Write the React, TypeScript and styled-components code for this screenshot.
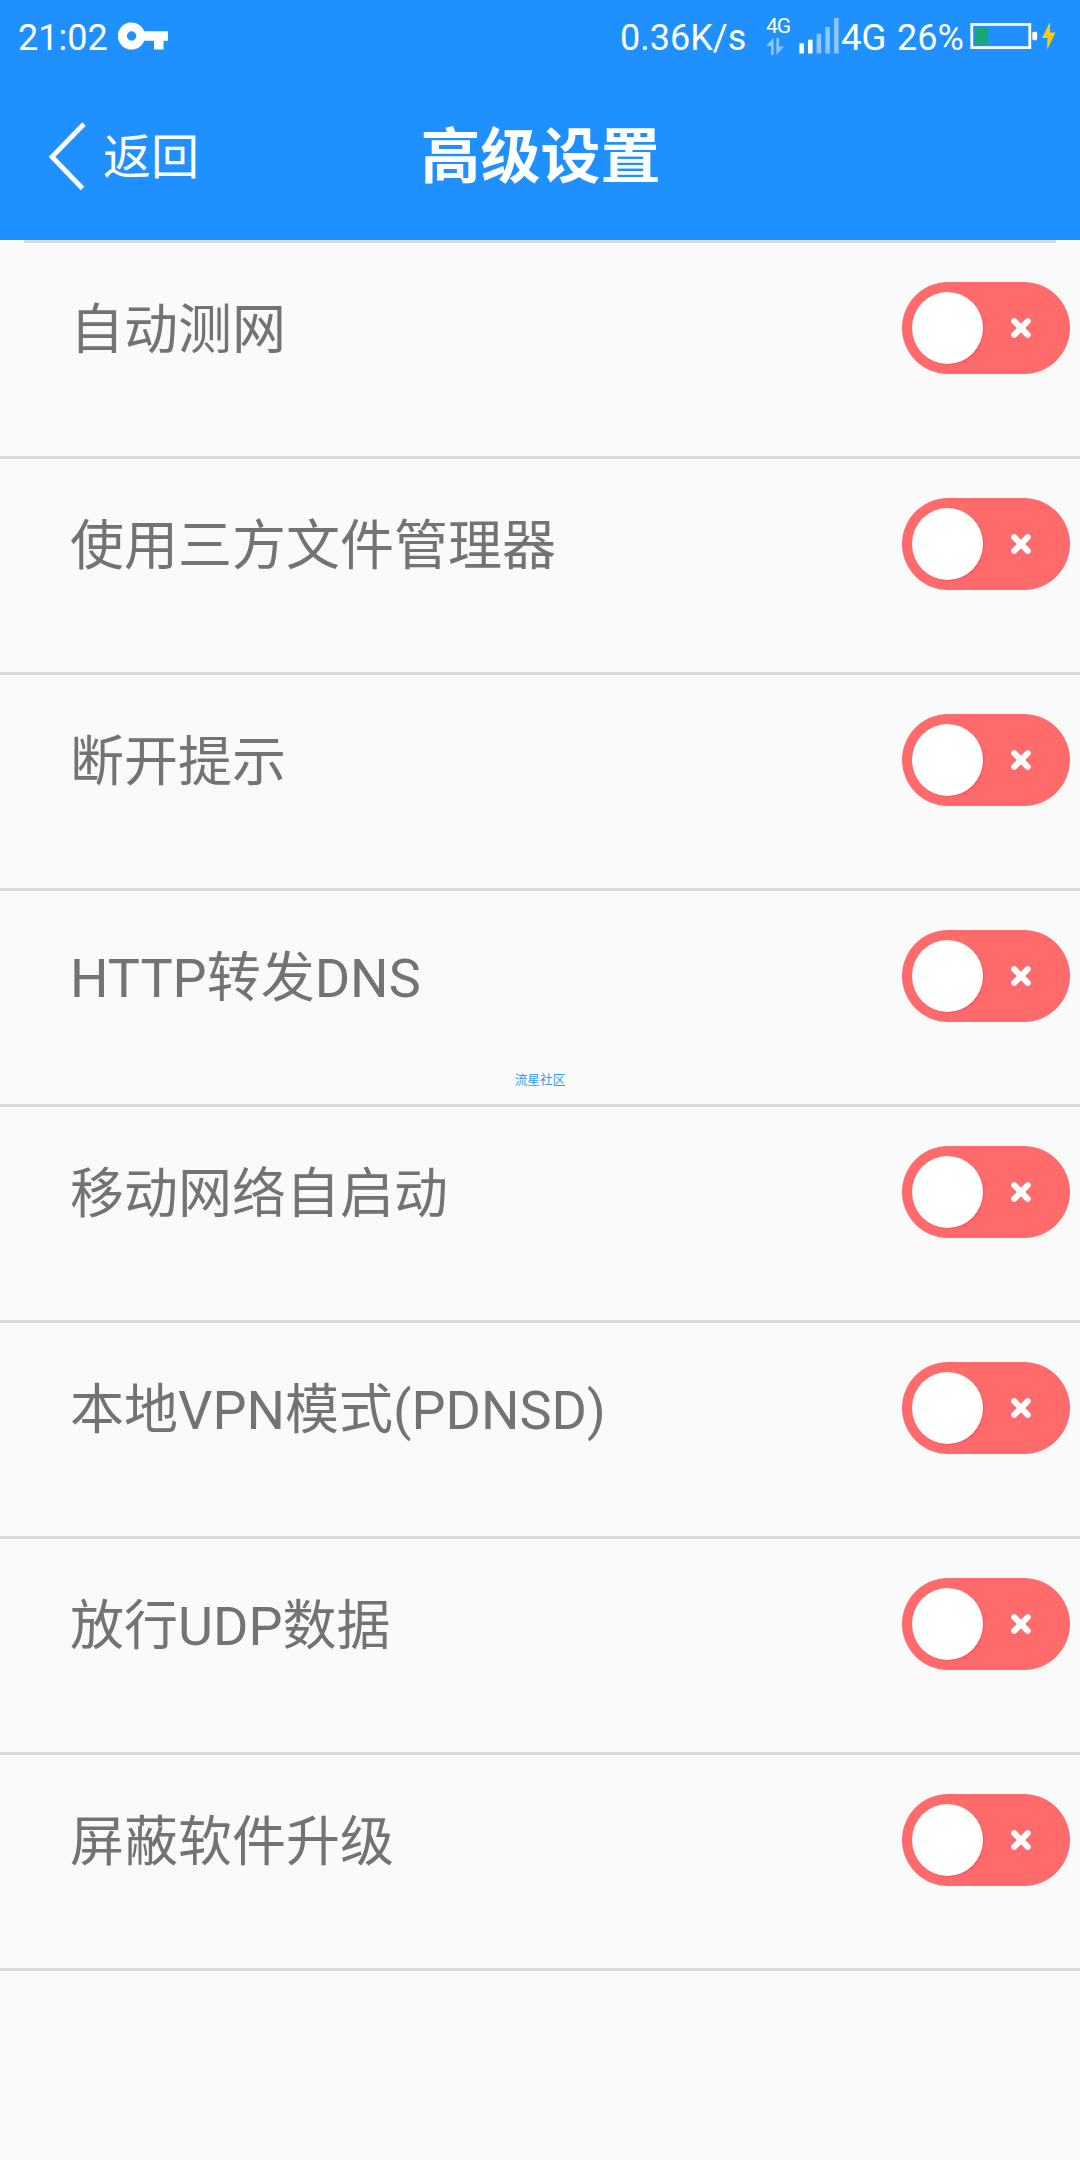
import React from "react";
import styled, { createGlobalStyle } from "styled-components";

const GlobalStyle = createGlobalStyle`
  * { box-sizing: border-box; }
  body {
    margin: 0;
    background: #fafafa;
    font-family: Roboto, "Noto Sans CJK SC", sans-serif;
  }
`;

const Screen = styled.div`
  position: relative;
  width: 1080px;
  height: 2160px;
  background: #fafafa;
  overflow: hidden;
`;

const TopArea = styled.header`
  height: 240px;
  background: #1e90ff;
  color: #fff;
`;

const StatusBar = styled.div`
  height: 72px;
  display: flex;
  align-items: flex-start;
  justify-content: space-between;
  padding-left: 18px;
`;

const StatusGroup = styled.div`
  display: flex;
  height: 72px;
`;

const StatusText = styled.span<{ $width: number; $size?: number; $tracking?: number }>`
  width: ${(p) => p.$width}px;
  padding-top: 17px;
  font-size: ${(p) => p.$size ?? 36}px;
  letter-spacing: ${(p) => p.$tracking ?? 0}px;
  line-height: 42px;
  white-space: nowrap;
`;

const NetworkColumn = styled.div`
  width: 33px;
  display: flex;
  flex-direction: column;
  padding-top: 16px;
`;

const NetworkType = styled.span`
  font-size: 21px;
  line-height: 21px;
  letter-spacing: -1px;
`;

const Icon = styled.svg`
  display: block;
  flex: none;
`;

const TitleBar = styled.div`
  height: 168px;
  display: grid;
  grid-template-columns: 1fr auto 1fr;
  align-items: center;
`;

const BackButton = styled.button`
  display: flex;
  align-items: center;
  padding: 0 0 0 46px;
  border: 0;
  background: none;
  color: inherit;
  font: inherit;
  font-size: 48px;
  line-height: 72px;
`;

const BackLabel = styled.span`
  padding-top: 3px;
`;

const Title = styled.h1`
  margin: 0;
  padding: 4px 0 0 1px;
  font-size: 60px;
  line-height: 88px;
  font-weight: 700;
`;

const TopDivider = styled.div`
  height: 3px;
  margin: 0 24px;
  background: #dadada;
`;

const List = styled.ul`
  list-style: none;
  margin: 0;
  padding: 0;
`;

const Row = styled.li`
  height: 216px;
  display: flex;
  justify-content: space-between;
  align-items: flex-start;
  padding: 39px 10px 0 70px;
  border-bottom: 3px solid #dadada;
`;

const Label = styled.span`
  padding-top: 11px;
  font-size: 54px;
  line-height: 76px;
  color: #737373;
  white-space: nowrap;
`;

const Toggle = styled.button`
  width: 168px;
  height: 92px;
  display: flex;
  align-items: center;
  justify-content: space-between;
  padding: 0 38px 0 10px;
  border: 0;
  border-radius: 46px;
  background: #ff6b6b;
`;

const Knob = styled.span`
  width: 71px;
  height: 72px;
  border-radius: 50%;
  background: #fff;
  box-shadow: 1px 1px 2px rgba(240, 50, 60, 0.4);
`;

const Watermark = styled.div`
  position: absolute;
  top: 1071px;
  left: 0;
  width: 100%;
  text-align: center;
  font-size: 12.7px;
  line-height: 18px;
  color: #2f9ff5;
`;

const settings = [
  "自动测网",
  "使用三方文件管理器",
  "断开提示",
  "HTTP转发DNS",
  "移动网络自启动",
  "本地VPN模式(PDNSD)",
  "放行UDP数据",
  "屏蔽软件升级",
];

const signalBars = [
  { x: 0.4, top: 43.3, on: true },
  { x: 9, top: 39.7, on: true },
  { x: 17.6, top: 33.7, on: false },
  { x: 26.3, top: 27, on: false },
  { x: 35, top: 18, on: false },
];

const KeyIcon = () => (
  <Icon width="52" height="72" viewBox="0 0 52 72">
    <path
      fill="#fff"
      fillRule="evenodd"
      d="M26.2 31.3A13.6 13.6 0 1 0 26.2 40.7H36V49.5H45.5V40.7H50V31.3ZM13.6 31.3a4.7 4.7 0 1 1 0 9.4a4.7 4.7 0 1 1 0-9.4Z"
    />
  </Icon>
);

const DataArrows = () => (
  <Icon width="18" height="20" viewBox="0 0 18 20">
    <path fill="#8ec7ff" d="M7.6 1V18H5V9H0ZM10.4 18V1H13V9.5H18Z" />
  </Icon>
);

const Signal = () => (
  <Icon width="42" height="72" viewBox="0 0 42 72">
    {signalBars.map((bar) => (
      <rect key={bar.x} x={bar.x} y={bar.top} width="4.6" height={53.5 - bar.top} fill={bar.on ? "#fff" : "#8ec7ff"} />
    ))}
  </Icon>
);

const Battery = () => (
  <Icon width="110" height="72" viewBox="970 0 110 72">
    <rect x="971.8" y="24.4" width="58" height="23.2" fill="none" stroke="#fff" strokeWidth="2.8" />
    <rect x="975" y="27.5" width="13.2" height="17" fill="#17a974" />
    <rect x="1032.3" y="31.7" width="4.8" height="8.6" rx="1.5" fill="#fff" />
    <path fill="#ffca0a" d="M1050 22L1042 38H1047.5L1047 50L1055.5 32.5H1050Z" />
  </Icon>
);

const BackIcon = () => (
  <Icon width="57" height="80" viewBox="46 116 57 80">
    <path d="M84 124L52 156.7L82.5 188.5" fill="none" stroke="#fff" strokeWidth="4.8" />
  </Icon>
);

const CrossIcon = () => (
  <Icon width="22" height="22" viewBox="0 0 22 22">
    <path d="M4.2 4.2L17.8 17.8M17.8 4.2L4.2 17.8" stroke="#fff" strokeWidth="6" strokeLinecap="round" />
  </Icon>
);

export default function App() {
  return (
    <>
      <GlobalStyle />
      <Screen>
        <TopArea>
          <StatusBar>
            <StatusGroup>
              <StatusText $width={100}>21:02</StatusText>
              <KeyIcon />
            </StatusGroup>
            <StatusGroup>
              <StatusText $width={146}>0.36K/s</StatusText>
              <NetworkColumn>
                <NetworkType>4G</NetworkType>
                <DataArrows />
              </NetworkColumn>
              <Signal />
              <StatusText $width={56} $size={37} $tracking={-0.5}>4G</StatusText>
              <StatusText $width={73}>26%</StatusText>
              <Battery />
            </StatusGroup>
          </StatusBar>
          <TitleBar>
            <BackButton>
              <BackIcon />
              <BackLabel>返回</BackLabel>
            </BackButton>
            <Title>高级设置</Title>
          </TitleBar>
        </TopArea>
        <TopDivider />
        <List>
          {settings.map((name) => (
            <Row key={name}>
              <Label>{name}</Label>
              <Toggle role="switch" aria-checked="false" aria-label={name}>
                <Knob />
                <CrossIcon />
              </Toggle>
            </Row>
          ))}
        </List>
        <Watermark>流星社区</Watermark>
      </Screen>
    </>
  );
}
